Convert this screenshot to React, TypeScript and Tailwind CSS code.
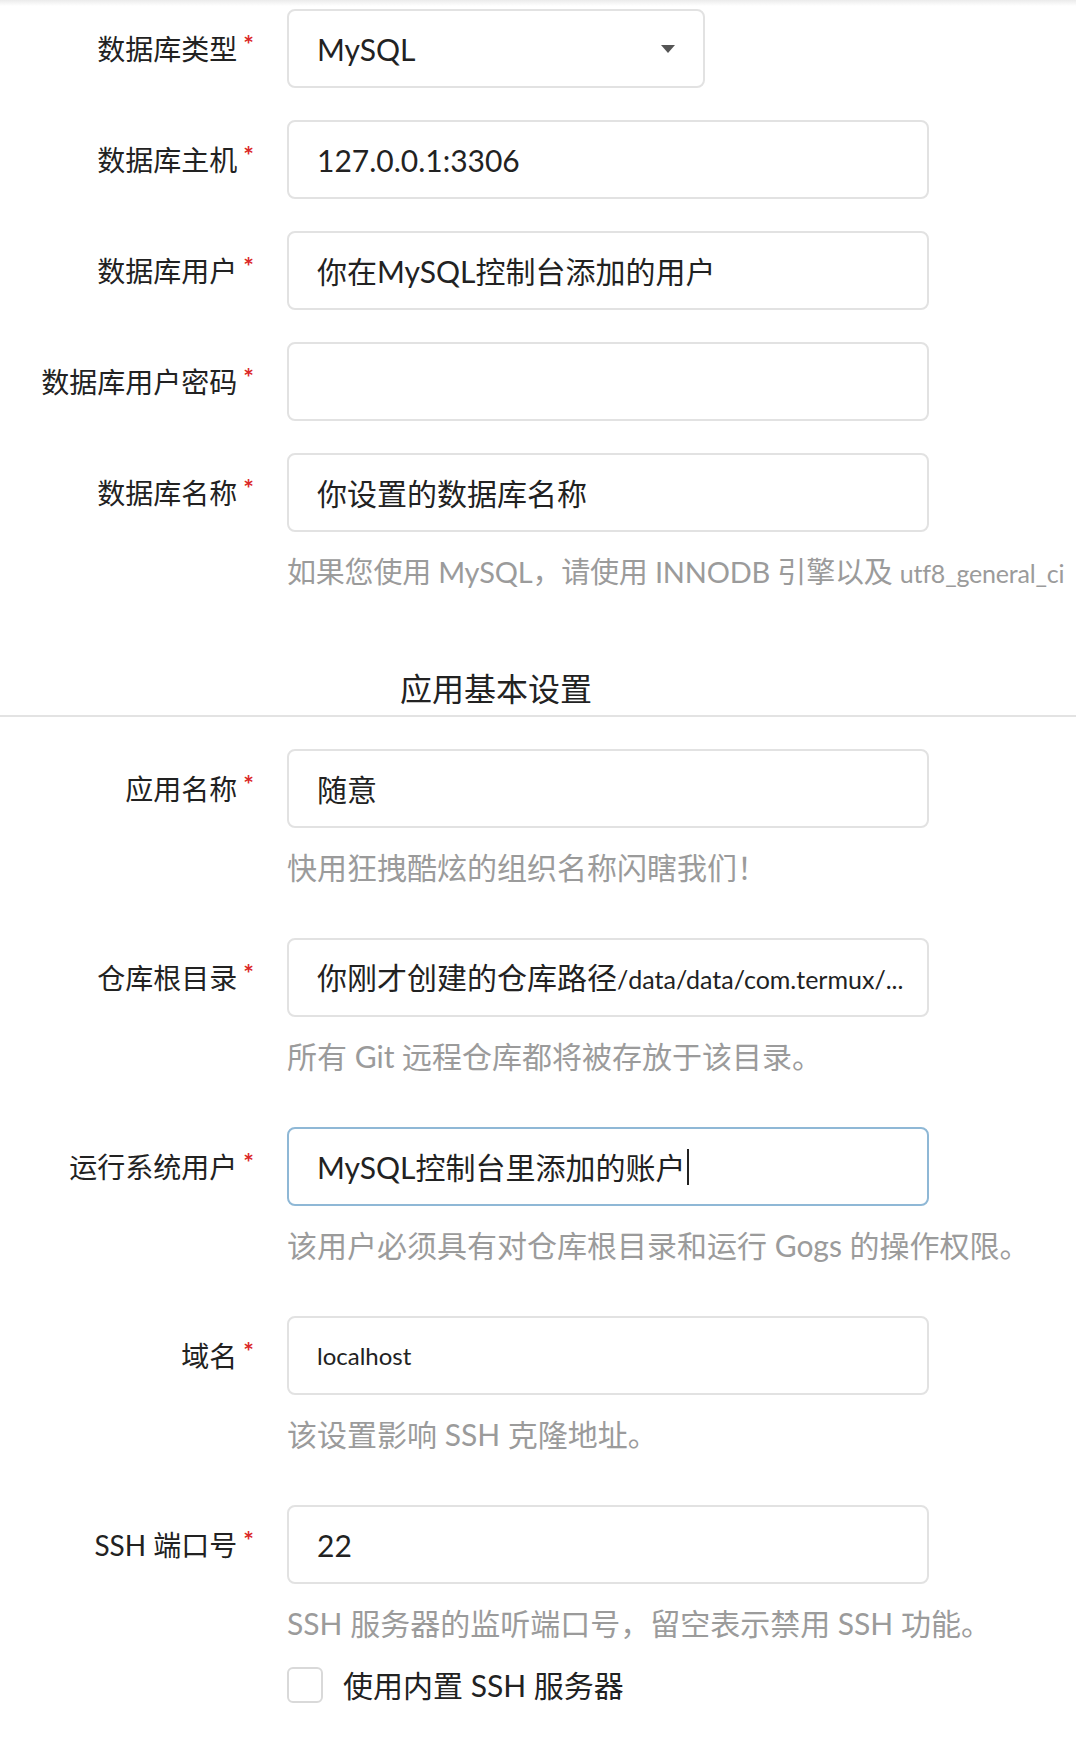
import React from "react";

const FONT = 'Lato, "Noto Sans CJK SC", "Noto Sans", sans-serif';

function Label({ text }: { text: string }) {
  return (
    <div className="w-[254px] shrink-0 flex justify-end items-center">
      <div className="flex items-start">
        <span className="text-[28px] leading-[28px] text-[#222] whitespace-nowrap">{text}</span>
        <span className="text-[25px] font-bold leading-none text-[#db2828] ml-[6px] -mt-[3px]">*</span>
      </div>
    </div>
  );
}

function Field({
  label,
  children,
  help,
  width = "w-[642px]",
  focused = false,
  last = false,
}: {
  label: string;
  children?: React.ReactNode;
  help?: string;
  width?: string;
  focused?: boolean;
  last?: boolean;
}) {
  return (
    <div className={help ? (last ? "" : "mb-[51px]") : "mb-[32px]"}>
      <div className="flex items-center h-[79px]">
        <Label text={label} />
        <div
          className={
            "ml-[33px] h-[79px] rounded-[8px] border-2 bg-white flex items-center pl-[28px] pr-[28px] overflow-hidden " +
            width +
            " " +
            (focused ? "border-[#8fb8d6]" : "border-[#e2e2e2]")
          }
        >
          {children}
        </div>
      </div>
      {help && (
        <div className="pl-[287px] mt-[19px] h-[40px] leading-[40px] text-[30px] text-[#9b9b9b] whitespace-nowrap">
          {help}
        </div>
      )}
    </div>
  );
}

function Val({ children }: { children: React.ReactNode }) {
  return <span className="text-[30px] leading-[40px] text-[#222] whitespace-nowrap">{children}</span>;
}

export default function App() {
  return (
    <div className="w-[1076px] min-h-[1744px] bg-white overflow-hidden" style={{ fontFamily: FONT }}>
      <div className="h-[6px] bg-gradient-to-b from-[#ebebeb] to-white" />
      <div className="pt-[3px]">
        <Field label="数据库类型" width="w-[418px]">
          <div className="flex-1 flex items-center justify-between">
            <Val>MySQL</Val>
            <svg width="14" height="8" viewBox="0 0 14 8">
              <path d="M0 0 L14 0 L7 8 Z" fill="#555" />
            </svg>
          </div>
        </Field>
        <Field label="数据库主机">
          <Val>127.0.0.1:3306</Val>
        </Field>
        <Field label="数据库用户">
          <Val>你在MySQL控制台添加的用户</Val>
        </Field>
        <Field label="数据库用户密码" />
        <div>
          <div className="flex items-center h-[79px]">
            <Label text="数据库名称" />
            <div className="ml-[33px] w-[642px] h-[79px] rounded-[8px] border-2 border-[#e2e2e2] flex items-center pl-[28px]">
              <Val>你设置的数据库名称</Val>
            </div>
          </div>
          <div className="pl-[287px] mt-[20px] h-[40px] leading-[40px] text-[29px] text-[#9b9b9b] whitespace-nowrap tracking-[-0.2px]">
            如果您使用 MySQL，请使用 INNODB 引擎以及 <span className="text-[25px]">utf8_general_ci</span>
          </div>
        </div>

        <div className="mt-[77px] pb-[6px] border-b-2 border-[#e3e3e3]">
          <div className="pl-[400px] h-[40px] leading-[40px] text-[32px] text-[#222]">应用基本设置</div>
        </div>

        <div className="pt-[32px]">
          <Field label="应用名称" help="快用狂拽酷炫的组织名称闪瞎我们！">
            <Val>随意</Val>
          </Field>
          <Field label="仓库根目录" help="所有 Git 远程仓库都将被存放于该目录。">
            <Val>
              你刚才创建的仓库路径<span className="text-[25px]">/data/data/com.termux/...</span>
            </Val>
          </Field>
          <Field label="运行系统用户" help="该用户必须具有对仓库根目录和运行 Gogs 的操作权限。" focused>
            <Val>MySQL控制台里添加的账户</Val>
            <span className="inline-block w-[2px] h-[36px] bg-[#222] ml-[1px]" />
          </Field>
          <Field label="域名" help="该设置影响 SSH 克隆地址。">
            <span className="text-[24px] leading-[40px] text-[#222]">localhost</span>
          </Field>
          <Field label="SSH 端口号" help="SSH 服务器的监听端口号，留空表示禁用 SSH 功能。" last>
            <Val>22</Val>
          </Field>
          <div className="flex items-center pl-[287px] mt-[22px]">
            <div className="w-[36px] h-[36px] rounded-[6px] border-2 border-[#d9d9d9] bg-white" />
            <span className="ml-[20px] text-[30px] leading-[40px] text-[#222] whitespace-nowrap">使用内置 SSH 服务器</span>
          </div>
        </div>
      </div>
    </div>
  );
}
